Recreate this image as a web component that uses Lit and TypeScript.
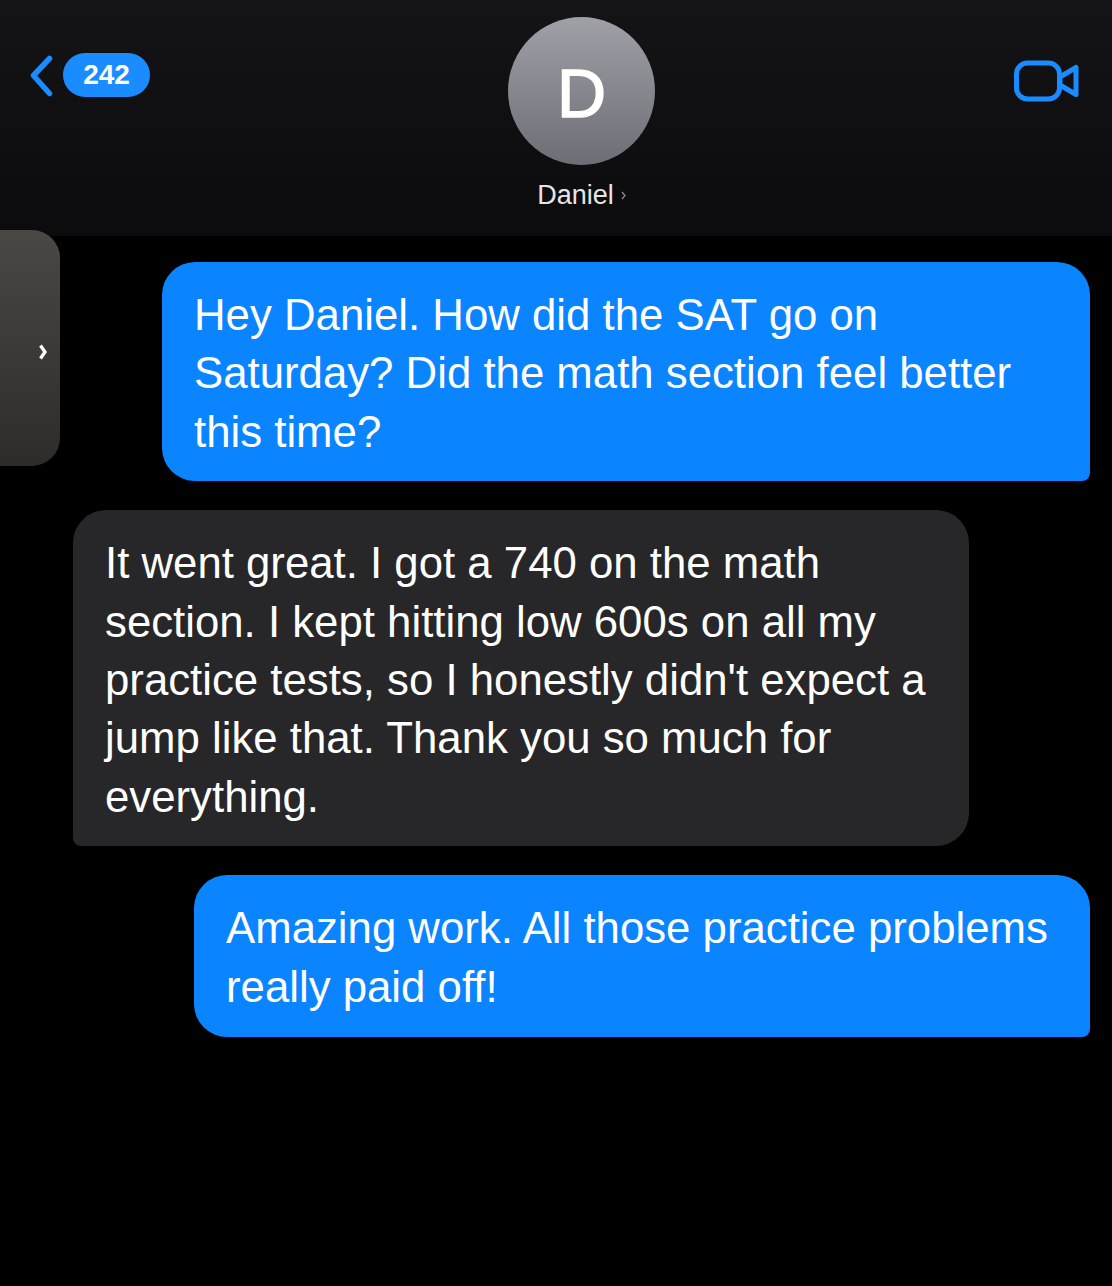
import { LitElement, html, css } from 'lit';
import { customElement } from 'lit/decorators.js';

interface Message {
  id: number;
  from: 'me' | 'them';
  text: string;
}

const MESSAGES: Message[] = [
  {
    id: 1,
    from: 'me',
    text: 'Hey Daniel. How did the SAT go on Saturday? Did the math section feel better this time?',
  },
  {
    id: 2,
    from: 'them',
    text: "It went great. I got a 740 on the math section. I kept hitting low 600s on all my practice tests, so I honestly didn't expect a jump like that. Thank you so much for everything.",
  },
  {
    id: 3,
    from: 'me',
    text: 'Amazing work. All those practice problems really paid off!',
  },
];

@customElement('app-root')
export class AppRoot extends LitElement {
  static styles = css`
    :host {
      display: block;
      position: relative;
      height: 1286px;
      overflow: hidden;
      background: #000;
      font-family: 'Liberation Sans', Arial, sans-serif;
      color: #fff;
    }
    .header {
      display: flex;
      justify-content: space-between;
      height: 236px;
      box-sizing: border-box;
      padding: 17px 32px 0 30px;
      background: linear-gradient(180deg, #141416 0%, #0b0b0d 100%);
    }
    .back {
      display: flex;
      align-items: flex-start;
      gap: 9px;
      padding-top: 36px;
    }
    .back svg {
      display: block;
      margin-top: 2px;
    }
    .count {
      width: 87px;
      height: 44px;
      border-radius: 22px;
      background: #1a8cff;
      font-size: 28px;
      font-weight: 700;
      line-height: 44px;
      text-align: center;
    }
    .contact {
      display: flex;
      flex-direction: column;
      align-items: center;
      margin-right: 1px;
    }
    .avatar {
      width: 147px;
      height: 148px;
      border-radius: 50%;
      background: linear-gradient(180deg, #a0a0a8 0%, #6c6d75 100%);
      font-size: 68px;
      line-height: 152px;
      text-align: center;
      -webkit-text-stroke: 1.5px #fff;
    }
    .name {
      display: flex;
      align-items: center;
      gap: 7px;
      margin-top: 14px;
      font-size: 27px;
      line-height: 32px;
      color: #e6e6e8;
    }
    .video {
      padding-top: 43px;
    }
    .video svg {
      display: block;
    }
    .peek {
      position: absolute;
      left: 0;
      top: 230px;
      width: 60px;
      height: 236px;
      border-radius: 0 28px 28px 0;
      background: linear-gradient(180deg, #4b4744 0%, #2e2b29 100%);
      display: flex;
      align-items: center;
      justify-content: flex-end;
      padding: 8px 13px 0 0;
      box-sizing: border-box;
    }
    .peek svg {
      display: block;
    }
    .thread {
      display: flex;
      flex-direction: column;
      gap: 29px;
      padding: 26px 22px 0 73px;
    }
    .bubble {
      box-sizing: border-box;
      font-size: 43.75px;
      line-height: 58.4px;
      border-radius: 33px;
      padding: 24px 32px 20px;
    }
    .me {
      align-self: flex-end;
      background: #0a84ff;
      border-bottom-right-radius: 8px;
    }
    .them {
      align-self: flex-start;
      width: 896px;
      background: #272729;
      border-bottom-left-radius: 8px;
    }
    .m1 {
      width: 928px;
    }
    .m3 {
      width: 896px;
      padding-bottom: 21px;
    }
  `;

  render() {
    return html`
      <div class="header">
        <div class="back">
          <svg width="24" height="42" viewBox="0 0 24 42" fill="none">
            <path
              d="M19.5 3.5 3.5 20.5 19.5 38.5"
              stroke="#1a8cff"
              stroke-width="5.5"
              stroke-linecap="round"
              stroke-linejoin="round"
            />
          </svg>
          <div class="count">242</div>
        </div>
        <div class="contact">
          <div class="avatar">D</div>
          <div class="name">
            <span>Daniel</span>
            <svg width="5" height="9" viewBox="0 0 5 9" fill="none">
              <path d="M1 1 4 4.5 1 8" stroke="#8e8e93" stroke-width="1.2" />
            </svg>
          </div>
        </div>
        <div class="video">
          <svg width="66" height="44" viewBox="0 0 66 44" fill="none">
            <rect x="2.5" y="3" width="43" height="36" rx="11" stroke="#1a8cff" stroke-width="5" />
            <path
              d="M46 17 62 7.5V34.5L46 25Z"
              stroke="#1a8cff"
              stroke-width="5"
              stroke-linejoin="round"
            />
          </svg>
        </div>
      </div>
      <div class="peek">
        <svg width="8" height="16" viewBox="0 0 8 16" fill="none">
          <path d="M1.5 1.5 6 8 1.5 14.5" stroke="#fff" stroke-width="3.4" />
        </svg>
      </div>
      <div class="thread">
        ${MESSAGES.map(
          (m) => html`<div class="bubble ${m.from} m${m.id}">${m.text}</div>`,
        )}
      </div>
    `;
  }
}

declare global {
  interface HTMLElementTagNameMap {
    'app-root': AppRoot;
  }
}
